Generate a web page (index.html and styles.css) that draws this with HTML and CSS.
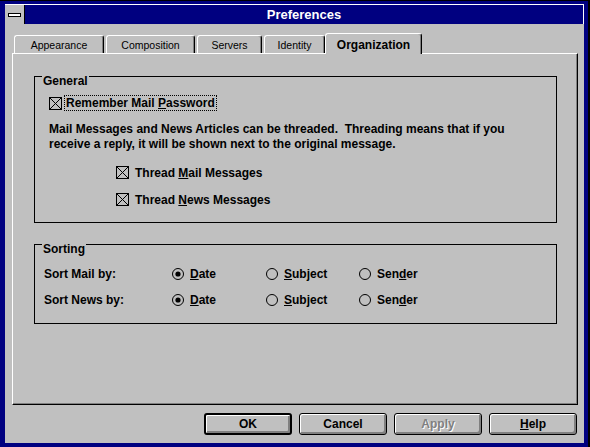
FILE: index.html
```html
<!DOCTYPE html>
<html lang="en">
<head>
    <meta charset="UTF-8">
    <meta name="viewport" content="width=device-width, initial-scale=1.0">
    <title>Preferences</title>
    <link rel="stylesheet" href="styles.css">
</head>
<body>
    <div class="window">
        <div class="titlebar">
            <div class="sysmenu"><span></span></div>
            <div class="title">Preferences</div>
        </div>
        <div class="client">
            <div class="tabs">
                <div class="tab t1">Appearance</div>
                <div class="tab t2">Composition</div>
                <div class="tab t3">Servers</div>
                <div class="tab t4">Identity</div>
                <div class="tab active">Organization</div>
            </div>
            <div class="panel">
                <div class="group general">
                    <div class="legend">General</div>
                    <div class="check first">
                        <svg class="box" width="13" height="13" viewBox="0 0 13 13"><rect x="0.5" y="0.5" width="12" height="12" fill="none" stroke="#000"/><path d="M1 1L12 12M12 1L1 12" stroke="#000"/></svg>
                        <span class="focus">Remember Mail <u>P</u>assword</span>
                    </div>
                    <p class="info">Mail Messages and News Articles can be threaded.&nbsp; Threading means that if you<br>receive a reply, it will be shown next to the original message.</p>
                    <div class="check sub">
                        <svg class="box" width="13" height="13" viewBox="0 0 13 13"><rect x="0.5" y="0.5" width="12" height="12" fill="none" stroke="#000"/><path d="M1 1L12 12M12 1L1 12" stroke="#000"/></svg>
                        <span>Thread <u>M</u>ail Messages</span>
                    </div>
                    <div class="check sub">
                        <svg class="box" width="13" height="13" viewBox="0 0 13 13"><rect x="0.5" y="0.5" width="12" height="12" fill="none" stroke="#000"/><path d="M1 1L12 12M12 1L1 12" stroke="#000"/></svg>
                        <span>Thread <u>N</u>ews Messages</span>
                    </div>
                </div>
                <div class="group sorting">
                    <div class="legend">Sorting</div>
                    <div class="sortrow">
                        <span>Sort Mail by:</span>
                        <span class="radio"><svg width="12" height="12" viewBox="0 0 12 12"><circle cx="6" cy="6" r="5.5" fill="none" stroke="#000"/><circle cx="6" cy="6" r="2.6" fill="#000"/></svg><u>D</u>ate</span>
                        <span class="radio"><svg width="12" height="12" viewBox="0 0 12 12"><circle cx="6" cy="6" r="5.5" fill="none" stroke="#000"/></svg><u>S</u>ubject</span>
                        <span class="radio"><svg width="12" height="12" viewBox="0 0 12 12"><circle cx="6" cy="6" r="5.5" fill="none" stroke="#000"/></svg>Sen<u>d</u>er</span>
                    </div>
                    <div class="sortrow second">
                        <span>Sort News by:</span>
                        <span class="radio"><svg width="12" height="12" viewBox="0 0 12 12"><circle cx="6" cy="6" r="5.5" fill="none" stroke="#000"/><circle cx="6" cy="6" r="2.6" fill="#000"/></svg><u>D</u>ate</span>
                        <span class="radio"><svg width="12" height="12" viewBox="0 0 12 12"><circle cx="6" cy="6" r="5.5" fill="none" stroke="#000"/></svg><u>S</u>ubject</span>
                        <span class="radio"><svg width="12" height="12" viewBox="0 0 12 12"><circle cx="6" cy="6" r="5.5" fill="none" stroke="#000"/></svg>Sen<u>d</u>er</span>
                    </div>
                </div>
            </div>
            <div class="buttons">
                <button class="btn default">OK</button>
                <button class="btn">Cancel</button>
                <button class="btn disabled">Apply</button>
                <button class="btn"><u>H</u>elp</button>
            </div>
        </div>
    </div>
</body>
</html>
```

FILE: styles.css
```css
* {
    padding: 0;
    margin: 0;
    box-sizing: border-box;
}
body {
    background-color: #000;
    font-family: "Liberation Sans", Arial, sans-serif;
    font-size: 12px;
    font-weight: bold;
    color: #000;
}
.window {
    width: 590px;
    height: 447px;
    background-color: #000080;
    border-top: 1px solid #000;
    border-right: 2px solid #000;
    padding: 3px 4px 4px 5px;
    display: flex;
    flex-direction: column;
}
.titlebar {
    height: 20px;
    flex: none;
    display: flex;
    border-top: 1px solid #fff;
    border-right: 1px solid #fff;
}
.sysmenu {
    width: 20px;
    height: 19px;
    background-color: #c0c0c0;
    border-right: 1px solid #000;
    display: flex;
    align-items: center;
    justify-content: center;
}
.sysmenu span {
    width: 13px;
    height: 4px;
    border: 1px solid #000;
    background-color: #fff;
}
.title {
    flex: 1;
    text-align: center;
    color: #fff;
    font-size: 13px;
    line-height: 19px;
}
.client {
    flex: 1;
    background-color: #c0c0c0;
    padding: 9px 6px 8px 7px;
    display: flex;
    flex-direction: column;
}
.tabs {
    display: flex;
    align-items: flex-end;
    height: 20px;
    padding-left: 2px;
}
.tab {
    height: 18px;
    border-left: 1px solid #fff;
    border-top: 1px solid #fff;
    border-right: 1px solid #000;
    box-shadow: inset -1px 0 #808080;
    border-radius: 3px 3px 0 0;
    margin-right: 2px;
    text-align: center;
    font-weight: normal;
    font-size: 10.5px;
    line-height: 16px;
    padding-top: 1px;
}
.t1 {
    width: 90px;
}
.t2 {
    width: 89px;
}
.t3 {
    width: 65px;
}
.t4 {
    width: 61px;
    margin-right: 0;
}
.tab.active {
    width: 97px;
    height: 21px;
    margin-bottom: -1px;
    position: relative;
    z-index: 1;
    background-color: #c0c0c0;
    font-weight: bold;
    font-size: 12px;
    padding-top: 3px;
    margin-right: 0;
}
.panel {
    height: 352px;
    flex: none;
    border-top: 1px solid #fff;
    border-left: 1px solid #fff;
    border-right: 1px solid #000;
    border-bottom: 1px solid #000;
    box-shadow: inset -1px -1px #808080;
    padding: 22px 20px 0 21px;
}
.group {
    border: 1px solid #000;
    padding-bottom: 16px;
}
.sorting {
    margin-top: 21px;
}
.legend {
    margin: -3px 0 0 7px;
    padding: 0 1px;
    width: fit-content;
    background-color: #c0c0c0;
    line-height: 14px;
}
.check {
    display: flex;
    align-items: center;
}
.check.first {
    margin: 7px 0 0 14px;
}
.focus {
    border: 1px dotted #000;
    padding: 0 1px;
    line-height: 14px;
    margin-left: 2px;
}
.info {
    margin: 11px 0 0 14px;
    line-height: 15px;
}
.check.sub {
    margin: 14px 0 0 81px;
    height: 13px;
}
.check.sub .box {
    margin-right: 6px;
}
.sortrow {
    display: grid;
    grid-template-columns: 128px 94px 93px auto;
    align-items: center;
    margin: 11px 0 0 9px;
    line-height: 14px;
}
.sortrow.second {
    margin-top: 12px;
}
.radio {
    display: flex;
    align-items: center;
}
.radio svg {
    margin-right: 6px;
}
.buttons {
    display: flex;
    justify-content: flex-end;
    gap: 7px;
    margin-top: 8px;
    padding-right: 1px;
}
.btn {
    width: 88px;
    height: 22px;
    border: 1px solid #000;
    border-radius: 3px;
    background-color: #c0c0c0;
    box-shadow: inset 1px 1px #fff, inset -2px -2px #808080;
    font: inherit;
    color: #000;
}
.btn.default {
    border-width: 2px;
}
.btn.disabled {
    color: #808080;
    text-shadow: 1px 1px #fff;
}
```
